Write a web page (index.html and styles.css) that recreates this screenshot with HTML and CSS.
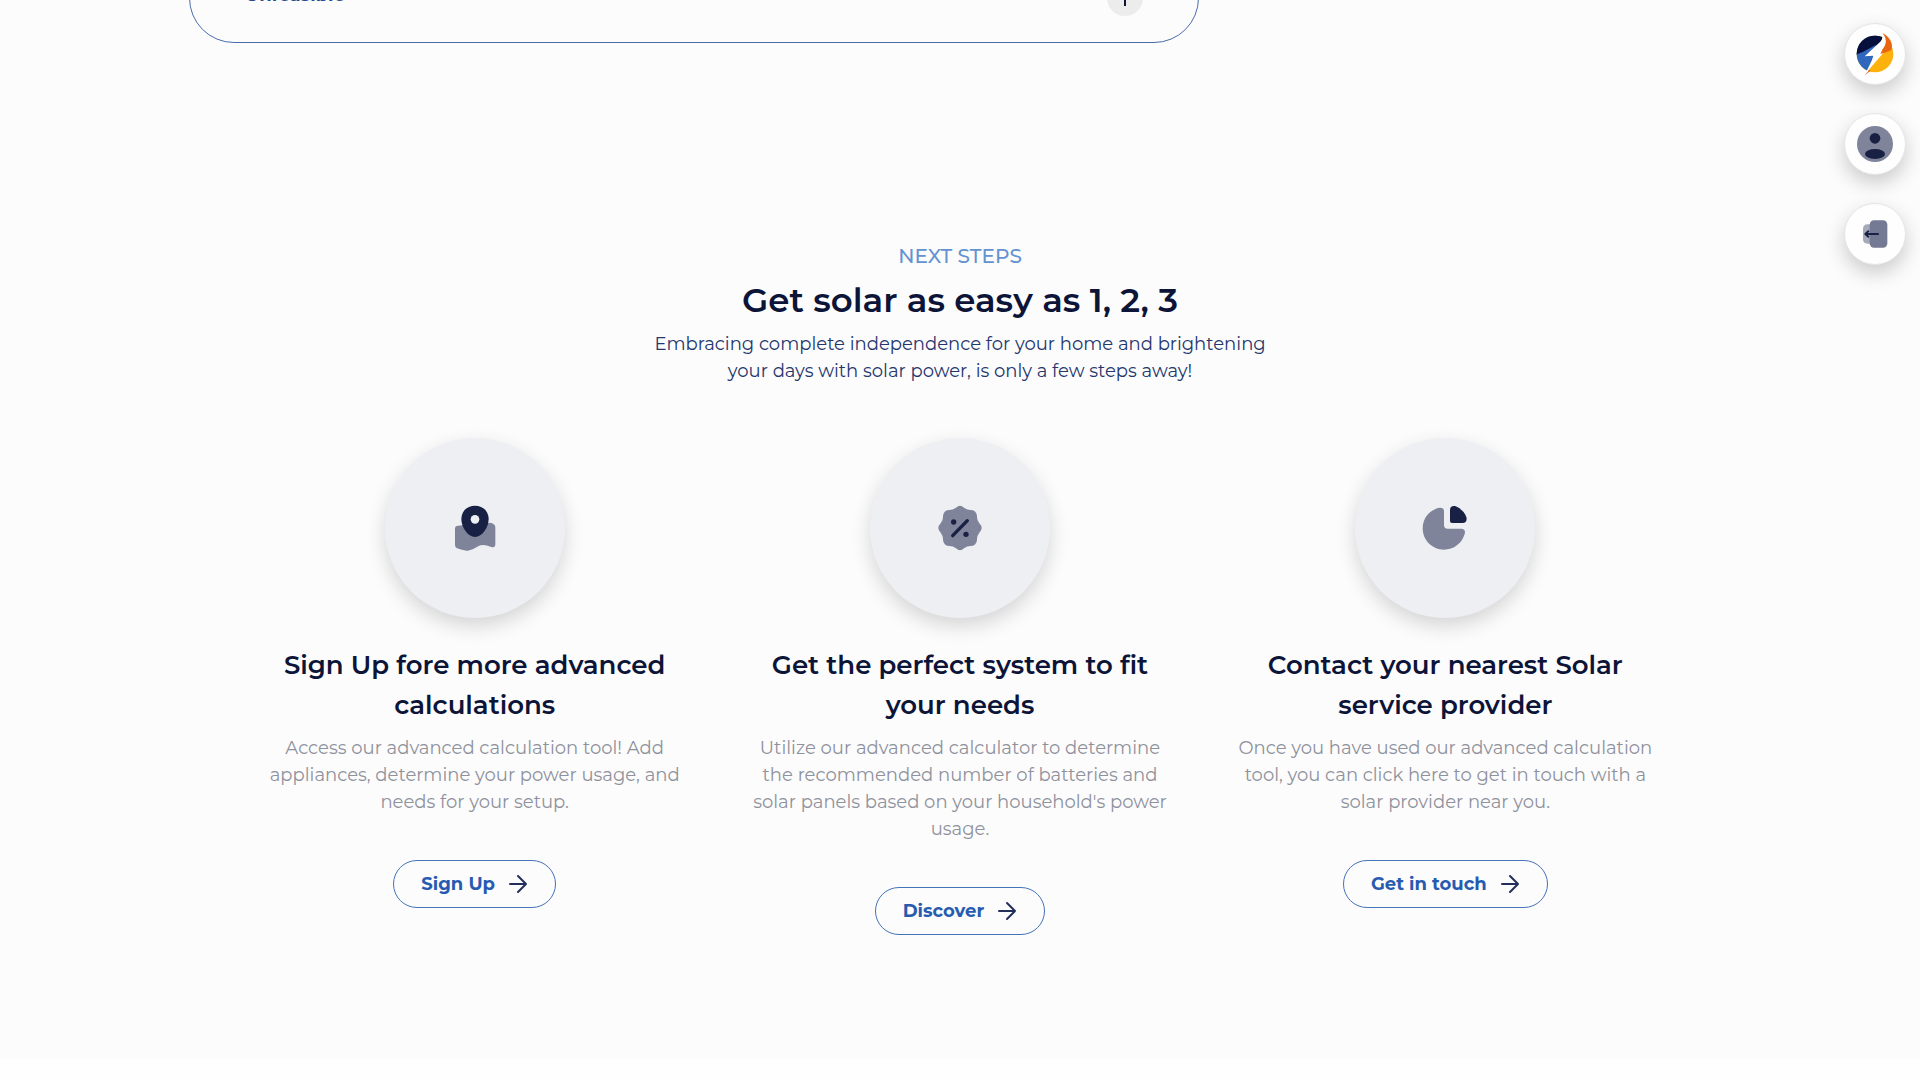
FILE: index.html
```
<!DOCTYPE html>
<html lang="en">
<head>
<meta charset="utf-8">
<meta name="viewport" content="width=device-width, initial-scale=1">
<title>Get solar as easy as 1, 2, 3</title>
<link rel="stylesheet" href="styles.css">
</head>
<body>
<main class="page">
  <section class="results">
    <div class="result-card">
      <span class="result-label" id="unfeasible">Unfeasible</span>
      <button class="expand" type="button" aria-labelledby="unfeasible">
        <svg width="16" height="16" viewBox="0 0 16 16" fill="none" stroke="currentColor" stroke-width="2"><path d="M8 0v16M0 8h16"/></svg>
      </button>
    </div>
  </section>

  <section class="steps">
    <header class="intro">
      <p class="eyebrow">NEXT STEPS</p>
      <h2 class="title">Get solar as easy as 1, 2, 3</h2>
      <p class="lead">Embracing complete independence for your home and brightening<br>your days with solar power, is only a few steps away!</p>
    </header>

    <div class="step-grid">
      <article class="step">
        <div class="badge">
          <svg width="42" height="46" viewBox="0 0 126 138">
            <path fill="#7f849b" d="M3 71q0-9 9-9 8 0 16-2l76-6q3-2 8 0 12 4 12 14v50q0 11-12 8-24-10-38-3-20 12-32 14-8 0-28-6-11-2-11-12z"/>
            <path fill="#182044" d="M63 2c25 0 41 18 41 40 0 24-19 54-41 54S22 66 22 42C22 20 38 2 63 2z"/>
            <circle cx="63" cy="43" r="13" fill="#eeeff3"/>
          </svg>
        </div>
        <h3 class="step-title">Sign Up fore more advanced<br>calculations</h3>
        <p class="step-text">Access our advanced calculation tool! Add<br>appliances, determine your power usage, and<br>needs for your setup.</p>
        <button class="pill" type="button">Sign Up
          <svg class="arrow" viewBox="0 0 24 24"><path d="M4 12h16M12 4l8 8-8 8"/></svg>
        </button>
      </article>

      <article class="step">
        <div class="badge">
          <svg width="46" height="46" viewBox="0 0 138 138">
            <path fill="#7f849b" d="M57 8q12-12 24 0 10 8 22 7 15 1 17 18-1 12 7 22 14 14 0 28-8 10-7 22-2 17-17 18-12-1-22 7-12 12-24 0-10-8-22-7-15-1-17-18 1-12-7-22-14-14 0-28 8-10 7-22 2-17 17-18 12 1 22-7z"/>
            <path d="M47 92 91 47" fill="none" stroke="#182044" stroke-width="10" stroke-linecap="round"/>
            <circle cx="50" cy="51" r="8" fill="#182044"/><circle cx="87" cy="88" r="8" fill="#182044"/>
          </svg>
        </div>
        <h3 class="step-title">Get the perfect system to fit<br>your needs</h3>
        <p class="step-text">Utilize our advanced calculator to determine<br>the recommended number of batteries and<br>solar panels based on your household's power<br>usage.</p>
        <button class="pill" type="button">Discover
          <svg class="arrow" viewBox="0 0 24 24"><path d="M4 12h16M12 4l8 8-8 8"/></svg>
        </button>
      </article>

      <article class="step">
        <div class="badge">
          <svg width="46" height="46" viewBox="0 0 138 138">
            <path fill="#7f849b" d="M49 9c10-3 17 1 17 10v41q0 11 11 11h41c9 0 13 7 10 16-8 28-33 47-62 47C31 134 2 106 2 70 2 40 22 16 49 9z"/>
            <path fill="#182044" d="M84 15c0-9 7-14 17-11 14 5 28 19 32 32 3 10-2 18-11 18H90q-6 0-6-6z"/>
          </svg>
        </div>
        <h3 class="step-title">Contact your nearest Solar<br>service provider</h3>
        <p class="step-text">Once you have used our advanced calculation<br>tool, you can click here to get in touch with a<br>solar provider near you.</p>
        <button class="pill" type="button">Get in touch
          <svg class="arrow" viewBox="0 0 24 24"><path d="M4 12h16M12 4l8 8-8 8"/></svg>
        </button>
      </article>
    </div>
  </section>
</main>

<nav class="rail" aria-label="Account">
  <a class="rail-item" href="#" aria-label="Home">
    <svg width="40" height="44" viewBox="105 95 120 132">
      <clipPath id="disc"><circle cx="165" cy="161" r="55"/></clipPath>
      <g clip-path="url(#disc)">
        <path fill="#fdb10d" d="M105 95h120v132H105z"/>
        <path fill="#2e67bd" d="M105 95h84l-4 45-45 80h-35z"/>
        <path fill="#07103d" d="M105 95h84l-5 38c-24-2-40 20-79 31z"/>
      </g>
      <path fill="#fff" d="M187 97c18 20 12 40-2 53l8 4-42 49-17 22 22-46 4-13-26 2 47-44c7-8 8-17 6-27z"/>
      <path fill="#e9650f" d="M187 98c22 11 34 32 27 50-6 6-20 8-33 13l7-14c13-16 13-33-1-49z"/>
      <path fill="#e9650f" d="m134 225 14-16 4 2z"/>
    </svg>
  </a>
  <a class="rail-item" href="#" aria-label="Profile">
    <svg width="36" height="36" viewBox="0 0 108 108">
      <circle cx="54" cy="54" r="54" fill="#7f849b"/>
      <circle cx="54" cy="37" r="16" fill="#182044"/><ellipse cx="54" cy="84" rx="30" ry="15" fill="#182044"/>
    </svg>
  </a>
  <a class="rail-item" href="#" aria-label="Log out">
    <svg width="26" height="28" viewBox="0 0 78 84">
      <path fill="#a6a9b8" d="M17 13h13v58H17Q3 71 3 57V27q0-14 14-14z"/>
      <rect x="23" y="1" width="53" height="82" rx="13" fill="#747a93"/>
      <path d="M48 42H12M19 34l-9 8 9 8" fill="none" stroke="#182044" stroke-width="6" stroke-linecap="round" stroke-linejoin="round"/>
    </svg>
  </a>
</nav>
</body>
</html>
```
FILE: styles.css
```
* { box-sizing: border-box; }

body {
  margin: 0;
  background: #fefefe;
  color: #0c1438;
  font-family: Montserrat, Inter, "Liberation Sans", sans-serif;
  overflow-x: hidden;
}

h2, h3, p { margin: 0; }

.page {
  background: #fcfcfc;
  padding-bottom: 124px;
}

/* The card continues above the visible edge */
.results {
  margin-top: -48px;
  padding: 0 189px;
}

.result-card {
  display: flex;
  align-items: center;
  justify-content: space-between;
  width: 66%;
  min-width: 600px;
  max-width: 1010px;
  height: 91px;
  padding: 0 55px;
  border: 1px solid #4a6cac;
  border-radius: 45px;
}

.result-label {
  padding-bottom: 5px;
  color: #274a8f;
  font-size: 18px;
  font-weight: 700;
}

.expand {
  display: grid;
  place-items: center;
  width: 36px;
  height: 36px;
  padding: 0;
  border: 0;
  border-radius: 50%;
  background: #ececec;
  color: #0c1438;
}

.steps { padding: 199px 24px 0; }

.intro { text-align: center; }

.eyebrow {
  color: #6393d0;
  font-size: 20px;
  font-weight: 500;
  line-height: 28px;
}

.title {
  margin: 6px 0 7px;
  font-size: 34px;
  font-weight: 600;
  line-height: 48px;
}

.lead {
  color: #24366e;
  font-size: 18px;
  line-height: 27px;
}

.step-grid {
  display: grid;
  grid-template-columns: repeat(3, minmax(0, 1fr));
  column-gap: 60px;
  max-width: 1396px;
  margin: 53px auto 0;
}

.step {
  display: flex;
  flex-direction: column;
  align-items: center;
  text-align: center;
}

.badge {
  display: grid;
  place-items: center;
  width: 180px;
  height: 180px;
  border-radius: 50%;
  background: #eeeff3;
  box-shadow: 0 8px 20px rgba(0, 0, 0, 0.16);
}

.step-title {
  margin-top: 27px;
  font-size: 26px;
  font-weight: 600;
  line-height: 40px;
}

.step-text {
  margin: 10px 0 44px;
  color: #8f929d;
  font-size: 18px;
  line-height: 27px;
}

.pill {
  display: inline-flex;
  align-items: center;
  gap: 11px;
  height: 48px;
  padding: 0 25px 0 27px;
  border: 1px solid #4473b8;
  border-radius: 24px;
  background: transparent;
  color: #275bb0;
  font: 700 18px/24px Montserrat, Inter, "Liberation Sans", sans-serif;
}

.arrow {
  width: 24px;
  height: 24px;
  fill: none;
  stroke: #232e5a;
  stroke-width: 2;
  stroke-linecap: round;
  stroke-linejoin: round;
}

.rail {
  position: fixed;
  top: 23px;
  right: 14px;
  display: flex;
  flex-direction: column;
  gap: 28px;
}

.rail-item {
  display: grid;
  place-items: center;
  width: 62px;
  height: 62px;
  border: 1px solid #e4e4e6;
  border-radius: 50%;
  background: #fefefe;
  box-shadow: 0 8px 20px rgba(0, 0, 0, 0.2);
}
```
